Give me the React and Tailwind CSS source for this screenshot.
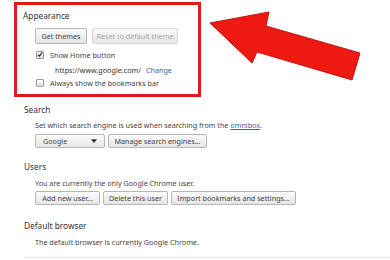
import React from "react";

const font = { fontFamily: '"Noto Sans", "Open Sans", sans-serif' };

function Btn({ children, disabled, className = "" }) {
  return (
    <div
      className={`flex items-center justify-center whitespace-nowrap border rounded-[2px] bg-gradient-to-b from-[#fbfbfb] to-[#e6e6e6] text-[7.2px] ${
        disabled ? "border-[#d6d6d6] text-[#a8a8a8]" : "border-[#b5b5b5] text-[#444]"
      } ${className}`}
    >
      {children}
    </div>
  );
}

function Check({ checked }) {
  return (
    <div className="w-[8px] h-[8px] border border-[#999] rounded-[1px] bg-gradient-to-b from-white to-[#e3e3e3] flex items-center justify-center">
      {checked && (
        <svg viewBox="0 0 10 10" className="w-[9px] h-[9px] -mt-[1px]">
          <path d="M1.5 5.2 L4 7.8 L8.8 1.5" stroke="#222" strokeWidth="1.8" fill="none" />
        </svg>
      )}
    </div>
  );
}

export default function App() {
  return (
    <div className="relative w-[390px] h-[260px] bg-white overflow-hidden text-[#444]" style={font}>
      <div className="pl-[14px] pt-[2px]">
        {/* Appearance */}
        <div className="w-[187px] h-[95px] border-[3px] border-[#e0191b] pl-[6px] pt-[5px]">
          <div className="text-[8.3px] text-[#333] leading-[12px]">Appearance</div>
          <div className="flex gap-[5px] mt-[6px] ml-[12px]">
            <Btn className="w-[52px] h-[16px]">Get themes</Btn>
            <Btn disabled className="w-[86px] h-[16px]">Reset to default theme</Btn>
          </div>
          <div className="flex items-center gap-[6px] mt-[6px] ml-[13px] leading-[10px]">
            <Check checked />
            <span className="text-[7.2px]">Show Home button</span>
          </div>
          <div className="flex gap-[5px] mt-[5px] ml-[32px] text-[7.2px] leading-[10px]">
            <span className="text-[#333]">https://www.google.com/</span>
            <span className="text-[#3b5fb5]">Change</span>
          </div>
          <div className="flex items-center gap-[6px] mt-[3px] ml-[13px] leading-[10px]">
            <Check />
            <span className="text-[7.2px]">Always show the bookmarks bar</span>
          </div>
        </div>

        {/* Search */}
        <div className="pl-[10px] mt-[7px]">
          <div className="text-[8.3px] text-[#333] leading-[12px]">Search</div>
          <div className="ml-[11px] mt-[4px] text-[7.2px] leading-[10px]">
            Set which search engine is used when searching from the{" "}
            <span className="text-[#3b5fb5] underline">omnibox</span>.
          </div>
          <div className="flex gap-[3px] ml-[11px] mt-[4px]">
            <Btn className="w-[70px] h-[14px] !justify-between px-[7px]">
              <span>Google</span>
              <svg viewBox="0 0 8 5" className="w-[6px] h-[4px]">
                <path d="M0 0 L8 0 L4 5 Z" fill="#333" />
              </svg>
            </Btn>
            <Btn className="w-[99px] h-[14px]">Manage search engines...</Btn>
          </div>
        </div>

        {/* Users */}
        <div className="pl-[10px] mt-[13px]">
          <div className="text-[8.3px] text-[#333] leading-[12px]">Users</div>
          <div className="ml-[11px] mt-[5px] text-[7.2px] leading-[10px]">
            You are currently the only Google Chrome user.
          </div>
          <div className="flex gap-[3px] ml-[11px] mt-[3px]">
            <Btn className="w-[65px] h-[14px]">Add new user...</Btn>
            <Btn className="w-[65px] h-[14px]">Delete this user</Btn>
            <Btn className="w-[125px] h-[14px]">Import bookmarks and settings...</Btn>
          </div>
        </div>

        {/* Default browser */}
        <div className="pl-[10px] mt-[15px]">
          <div className="text-[8.3px] text-[#333] leading-[12px]">Default browser</div>
          <div className="ml-[11px] mt-[5px] text-[7.2px] leading-[10px]">
            The default browser is currently Google Chrome.
          </div>
          <div className="mt-[10px] border-t border-[#e6e6e6]" />
        </div>
      </div>

      {/* Arrow */}
      <svg className="absolute left-0 top-0" width="390" height="260" viewBox="0 0 390 260">
        <polygon
          points="210,23 269,12 266,26 360,53 352,80 257,52 252,63"
          fill="#ee1a12"
          stroke="#c81010"
          strokeWidth="1"
          strokeLinejoin="round"
        />
      </svg>
    </div>
  );
}
